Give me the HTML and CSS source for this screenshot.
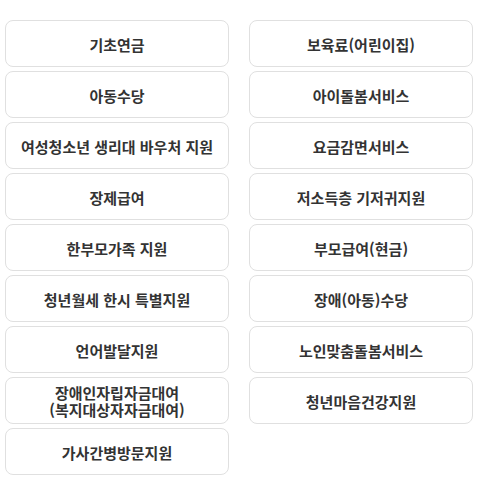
FILE: index.html
```html
<!DOCTYPE html>
<html lang="ko">
<head>
<meta charset="utf-8">
<link rel="stylesheet" href="styles.css">
</head>
<body>
<div class="grid">
  <button class="item">기초연금</button>
  <button class="item">보육료(어린이집)</button>
  <button class="item">아동수당</button>
  <button class="item">아이돌봄서비스</button>
  <button class="item">여성청소년 생리대 바우처 지원</button>
  <button class="item">요금감면서비스</button>
  <button class="item">장제급여</button>
  <button class="item">저소득층 기저귀지원</button>
  <button class="item">한부모가족 지원</button>
  <button class="item">부모급여(현금)</button>
  <button class="item">청년월세 한시 특별지원</button>
  <button class="item">장애(아동)수당</button>
  <button class="item">언어발달지원</button>
  <button class="item">노인맞춤돌봄서비스</button>
  <button class="item">장애인자립자금대여<br>(복지대상자자금대여)</button>
  <button class="item">청년마음건강지원</button>
  <button class="item">가사간병방문지원</button>
</div>
</body>
</html>
```
FILE: styles.css
```css
html, body {
  margin: 0;
  padding: 0;
  background: #fff;
}
body {
  font-family: "Noto Sans CJK KR", "Noto Sans", sans-serif;
}
.grid {
  display: grid;
  grid-template-columns: 224px 224px;
  grid-auto-rows: 47px;
  column-gap: 20px;
  row-gap: 4px;
  padding: 20px 0 0 5px;
}
.item {
  box-sizing: border-box;
  margin: 0;
  padding: 1px 4px 0;
  background: #fff;
  border: 1px solid #e0e0e0;
  border-radius: 8px;
  font-family: inherit;
  font-size: 15px;
  font-weight: 700;
  line-height: 17px;
  color: #333;
  text-align: center;
}
```
